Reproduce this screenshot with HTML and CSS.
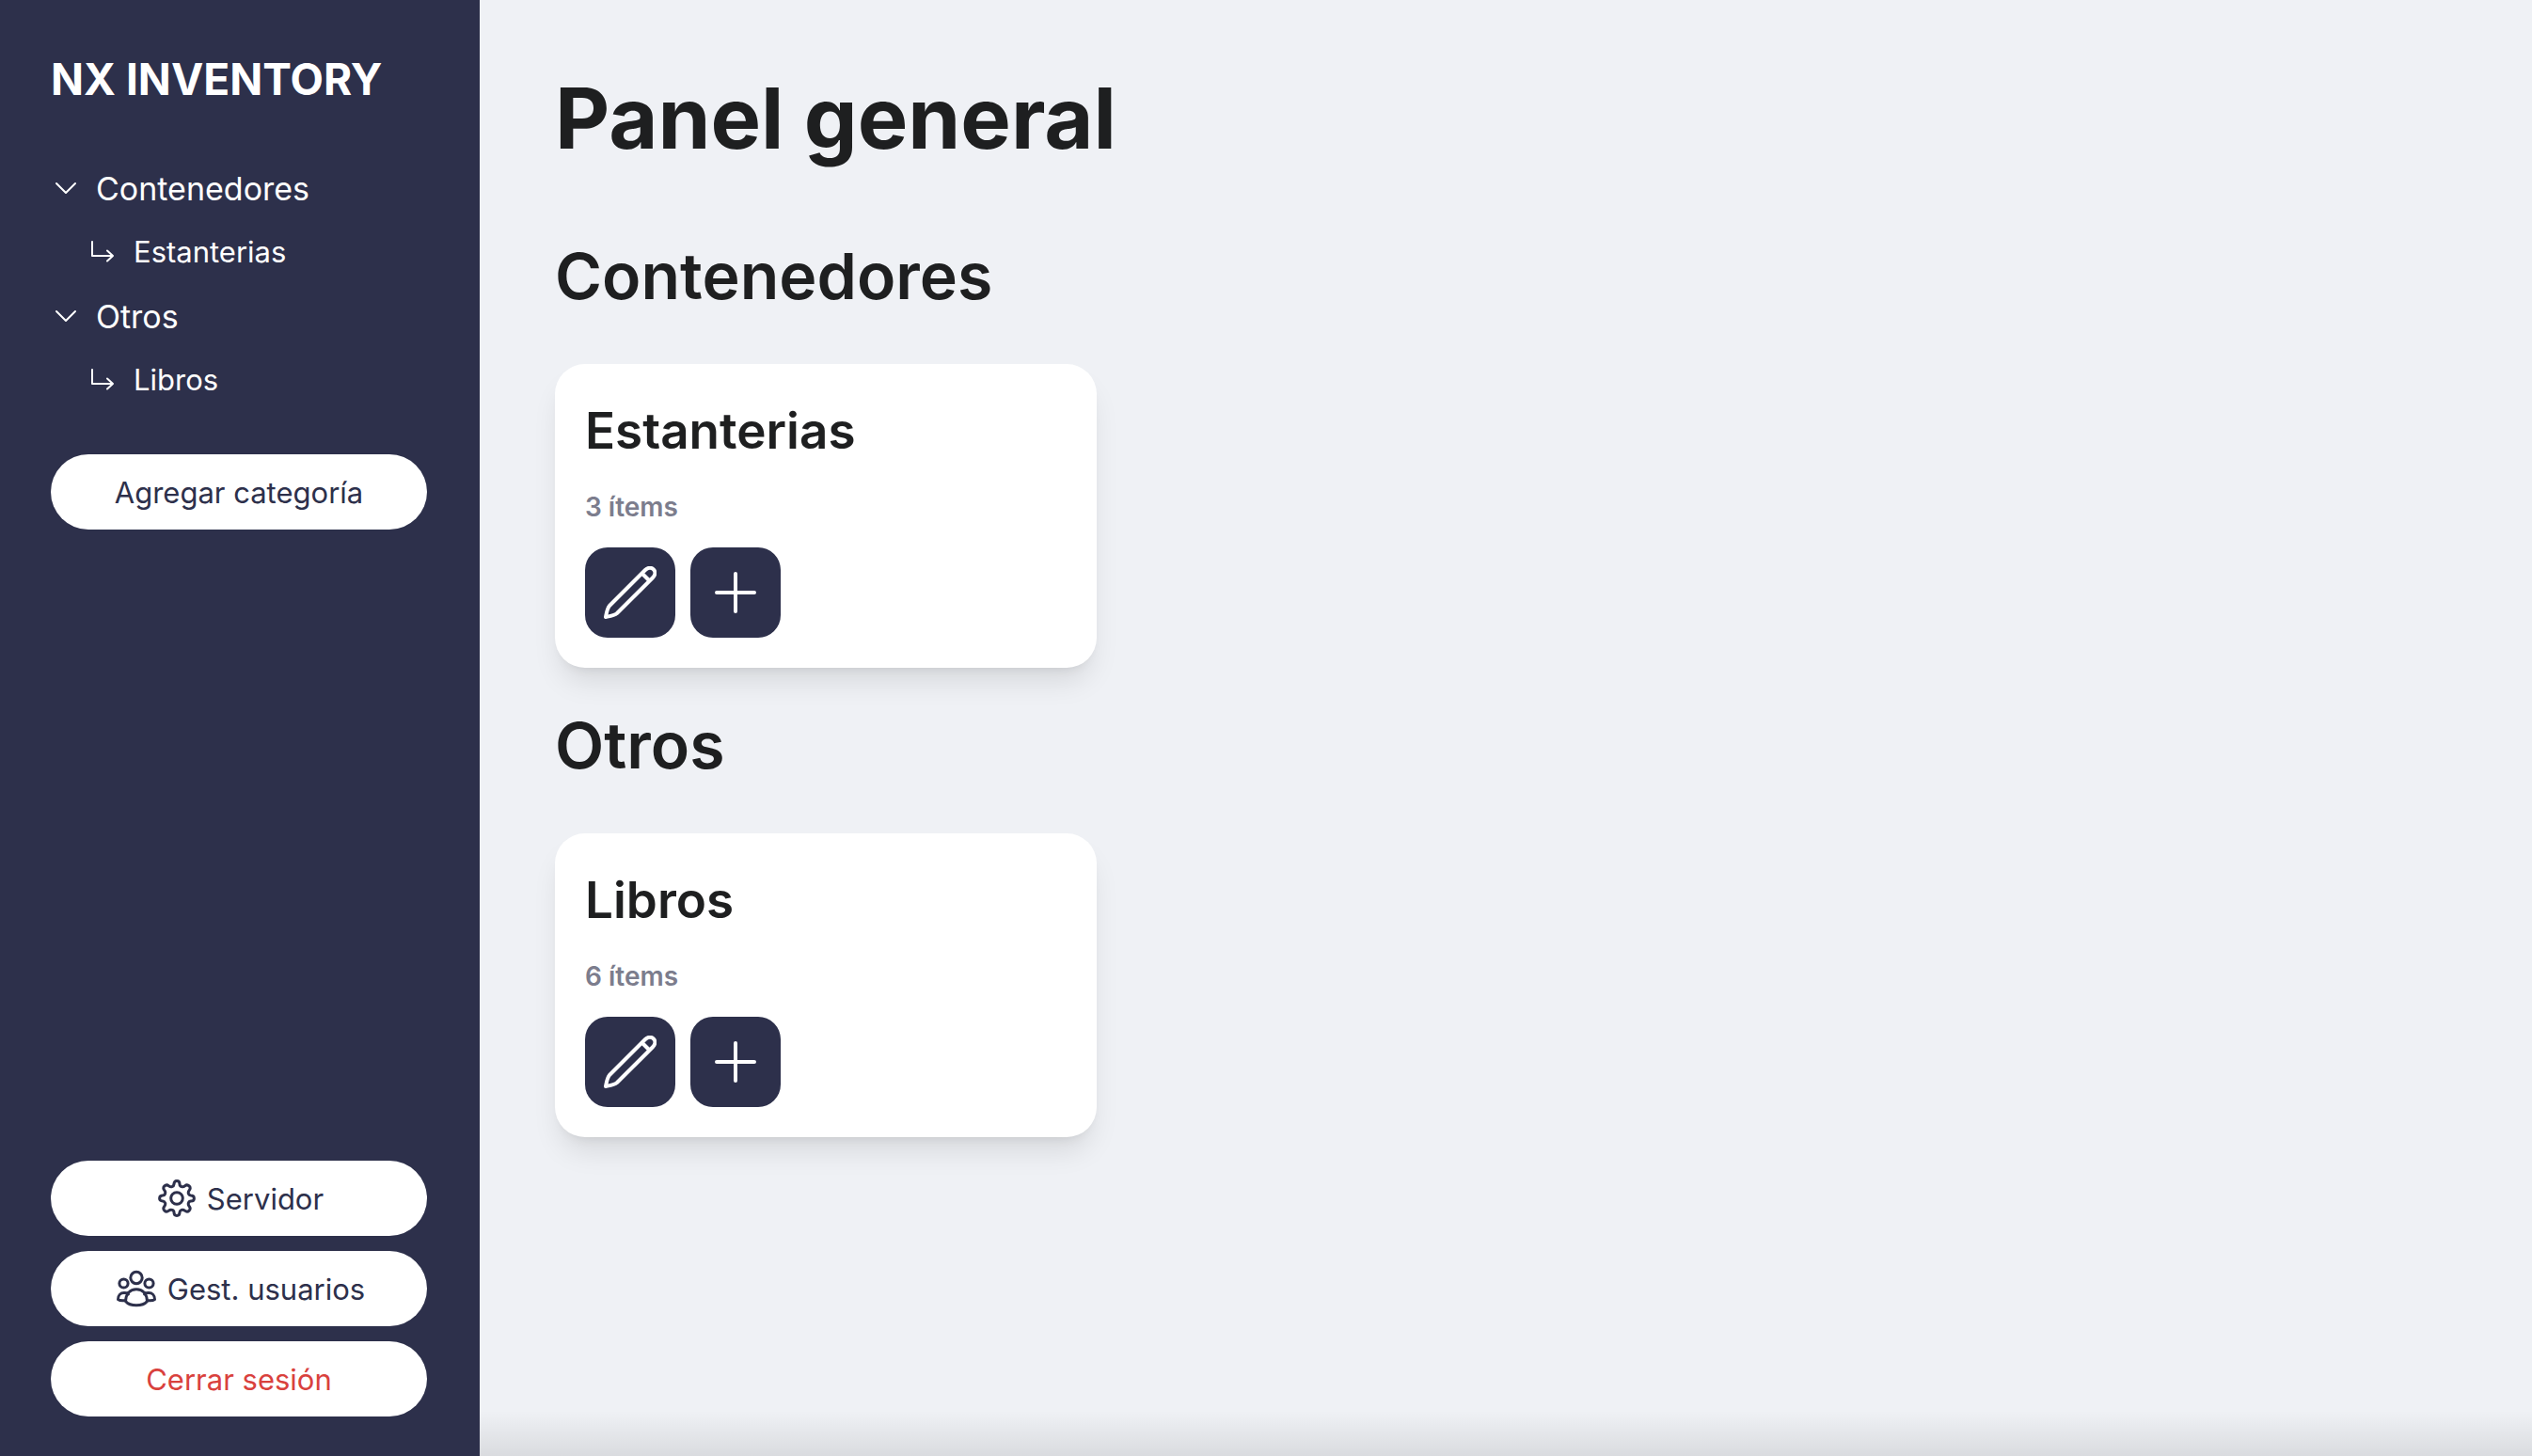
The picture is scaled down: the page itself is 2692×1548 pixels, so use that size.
FILE: index.html
```html
<!DOCTYPE html>
<html lang="es">
<head>
<meta charset="utf-8">
<title>NX Inventory</title>
<link rel="stylesheet" href="styles.css">
</head>
<body>
<svg class="sprite" aria-hidden="true">
  <symbol id="chevron" viewBox="0 0 24 24"><path d="M2 7 12 17 22 7"/></symbol>
  <symbol id="branch" viewBox="0 0 26 24"><path d="M2 2V17H24M18 11.500 24 17 18 22.500"/></symbol>
  <symbol id="gear" viewBox="0 0 40 40"><circle cx="20" cy="20" r="6.300"/><path d="M17 5Q17 1.600 20 1.600T23 5Q23 7 25 7.600T28.500 6.800Q31 4.800 33.100 6.900T33.200 11.500Q31.800 13.200 32.400 15T35 17Q38.400 17 38.400 20T35 23Q33 23 32.400 25T33.200 28.500Q35.200 31 33.100 33.100T28.500 33.200Q26.800 31.800 25 32.400T23 35Q23 38.400 20 38.400T17 35Q17 33 15 32.400T11.500 33.200Q9 35.200 6.900 33.100T6.800 28.500Q8.200 26.800 7.600 25T5 23Q1.600 23 1.600 20T5 17Q7 17 7.600 15T6.800 11.500Q4.800 9 6.900 6.900T11.500 6.800Q13.200 8.200 15 7.600T17 5Z"/></symbol>
  <symbol id="people" viewBox="0 0 42 40"><circle cx="21" cy="8.500" r="6.200"/><circle cx="7.500" cy="14.500" r="4.600"/><circle cx="34.500" cy="14.500" r="4.600"/><path d="M9.500 33.500C10 26 14 20.800 21 20.800S32 26 32.500 33.500C30 36.500 26 37.800 21 37.800S12 36.500 9.500 33.500ZM12.500 25.800C11 24.800 9.800 24.600 8 24.600 4 24.600 1.500 27.500 1.500 31.500 3.500 33 6.500 33 9.500 32.500M29.500 25.800C31 24.800 32.200 24.600 34 24.600 38 24.600 40.500 27.500 40.500 31.500 38.500 33 35.500 33 32.500 32.500"/></symbol>
  <symbol id="pencil" viewBox="0 0 56 56"><path d="M2 54C3 49 3.500 45 6 42L44 4C47 1 50.700 1.200 52.800 3.300 55 5.500 55 9 52.200 12L14 50C11 52.500 7 53 2 54ZM40.500 7.500 48.500 15.500"/></symbol>
  <symbol id="plus" viewBox="0 0 56 56"><path d="M28 8V48M8 28H48"/></symbol>
</svg>

<div class="app">
  <aside class="sidebar">
    <p class="brand">NX INVENTORY</p>
    <nav>
      <ul class="nav">
        <li>
          <a class="nav-group" href="#contenedores"><svg class="chevron"><use href="#chevron"/></svg>Contenedores</a>
          <ul><li><a class="nav-item" href="#estanterias"><svg class="branch"><use href="#branch"/></svg>Estanterias</a></li></ul>
        </li>
        <li>
          <a class="nav-group" href="#otros"><svg class="chevron"><use href="#chevron"/></svg>Otros</a>
          <ul><li><a class="nav-item" href="#libros"><svg class="branch"><use href="#branch"/></svg>Libros</a></li></ul>
        </li>
      </ul>
    </nav>
    <button class="pill" type="button">Agregar categoría</button>
    <div class="sidebar-footer">
      <button class="pill with-icon" type="button"><svg class="gear"><use href="#gear"/></svg>Servidor</button>
      <button class="pill with-icon" type="button"><svg class="people"><use href="#people"/></svg>Gest. usuarios</button>
      <button class="pill danger" type="button">Cerrar sesión</button>
    </div>
  </aside>

  <main class="content">
    <h1>Panel general</h1>
    <section class="category" id="contenedores">
      <h2>Contenedores</h2>
      <div class="cards">
        <article class="card" id="estanterias">
          <h3>Estanterias</h3>
          <p class="count">3 ítems</p>
          <div class="actions">
            <button class="action" type="button" aria-label="Editar"><svg class="pencil"><use href="#pencil"/></svg></button>
            <button class="action" type="button" aria-label="Agregar"><svg class="plus"><use href="#plus"/></svg></button>
          </div>
        </article>
      </div>
    </section>
    <section class="category" id="otros">
      <h2>Otros</h2>
      <div class="cards">
        <article class="card" id="libros">
          <h3>Libros</h3>
          <p class="count">6 ítems</p>
          <div class="actions">
            <button class="action" type="button" aria-label="Editar"><svg class="pencil"><use href="#pencil"/></svg></button>
            <button class="action" type="button" aria-label="Agregar"><svg class="plus"><use href="#plus"/></svg></button>
          </div>
        </article>
      </div>
    </section>
  </main>
</div>
</body>
</html>
```
FILE: styles.css
```css
:root {
  --navy: #2d304b;
  --page: #eff1f5;
  --ink: #1e1f20;
}

* { box-sizing: border-box; margin: 0; padding: 0; }

body {
  background: var(--page);
  color: var(--ink);
  font-family: Inter, "Liberation Sans", sans-serif;
}

.sprite { display: none; }
svg { flex: none; fill: none; stroke: currentColor; stroke-linecap: round; stroke-linejoin: round; }
ul { list-style: none; }
a { color: inherit; text-decoration: none; }
button { border: 0; font: inherit; cursor: pointer; }

.app { display: flex; min-height: 100vh; }

.sidebar {
  display: flex;
  flex-direction: column;
  flex: none;
  width: 510px;
  padding: 56px 56px 42px 54px;
  background: var(--navy);
  color: #fff;
}

.brand { margin-bottom: 54px; font-size: 46px; font-weight: 700; line-height: 56px; }

.nav { margin-bottom: 45px; }
.nav-group, .nav-item { display: flex; align-items: center; height: 68px; }
.nav-group { gap: 20px; padding-left: 4px; font-size: 34px; }
.nav-item { gap: 20px; padding: 0 0 2px 42px; font-size: 31px; }
.chevron { width: 24px; height: 24px; stroke-width: 2; }
.branch { width: 26px; height: 24px; stroke-width: 2; }

.pill {
  display: flex;
  align-items: center;
  justify-content: center;
  gap: 12px;
  width: 100%;
  height: 80px;
  border-radius: 40px;
  background: #fff;
  color: var(--navy);
  font-size: 31px;
}
.with-icon { padding-left: 4px; }
.danger { color: #d9413d; }
.gear { width: 40px; height: 40px; stroke-width: 3; }
.people { width: 42px; height: 40px; stroke-width: 3; }

.sidebar-footer { display: flex; flex-direction: column; gap: 16px; margin-top: auto; }

/* Soft shade along the bottom edge of the content */
.content {
  flex: 1;
  min-width: 0;
  padding: 78px 80px;
  background: linear-gradient(rgba(0, 0, 0, 0), rgba(0, 0, 0, .09)) bottom / 100% 48px no-repeat;
}
h1 { margin-bottom: 79px; font-size: 90px; font-weight: 700; line-height: 96px; }
h2 { margin-bottom: 54px; font-size: 68px; font-weight: 600; line-height: 80px; }
.category + .category { margin-top: 42px; }

.cards { display: flex; flex-wrap: wrap; gap: 32px; }
.card {
  width: 576px;
  padding: 32px;
  border-radius: 32px;
  background: #fff;
  box-shadow: 0 20px 30px -6px rgba(0, 0, 0, .1), 0 8px 12px -8px rgba(0, 0, 0, .1);
}
h3 { margin-bottom: 24px; font-size: 53px; font-weight: 600; line-height: 78px; }
.count { margin-bottom: 25px; color: #7c7d8d; font-size: 28px; font-weight: 600; line-height: 36px; }
.actions { display: flex; gap: 16px; }
.action {
  display: grid;
  place-items: center;
  width: 96px;
  height: 96px;
  border-radius: 24px;
  background: var(--navy);
  color: #fff;
}
.pencil, .plus { width: 56px; height: 56px; }
.pencil, .plus { stroke-width: 4; }
```
